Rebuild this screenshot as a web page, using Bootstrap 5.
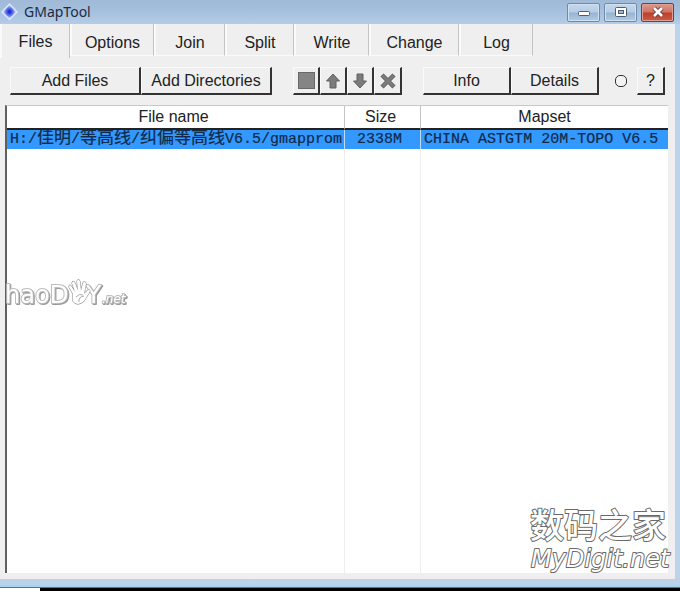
<!DOCTYPE html>
<html lang="en">
<head>
<meta charset="utf-8">
<meta name="viewport" content="width=device-width, initial-scale=1">
<title>GMapTool</title>
<link href="https://cdn.jsdelivr.net/npm/bootstrap@5.3.0/dist/css/bootstrap.min.css" rel="stylesheet">
<style>
body{font:16px/20px "Liberation Sans",Arial,sans-serif;color:#222;background:#000}
.app{background:#bcd3ea;min-height:100vh}
.titlebar{height:24px;background:linear-gradient(#9fb9d6,#a6c1de 50%,#b3cde8);padding-right:6px}
.title-text{font:14px/22px "Noto Sans",sans-serif;color:#1d2b42}
.win-btn{width:33px;height:19px;border:1px solid #6f89a8;border-radius:2px;background:linear-gradient(#c5d8ec,#b5cce5 48%,#96b4d3 52%,#b1cae3);box-shadow:inset 0 0 0 1px #d2e1f0}
.win-close{border-color:#7c3b3b;background:linear-gradient(#dd9a8c,#d07362 48%,#bb3f2b 52%,#cd5b43);box-shadow:inset 0 0 0 1px #dca094}
.client{background:#efefef;margin-right:5px}
.tab{height:32px;border:0;border-right:1px solid #c4c4c4;border-left:2px solid #fafafa;border-bottom:1px solid #fafafa;background:#efefef;color:#222;padding:6px 0 0}
.tab.active{height:34px;border-bottom:0;padding:1px 0 0}
.w-files{width:70px}.w-options{width:84px}.w-join{width:71px}.w-split{width:69px}.w-write{width:75px}.w-change{width:90px}.w-log{width:74px}
.toolbar{padding:9px 10px 0}
.tool{height:28px;border:solid;border-width:1px 2px 2px 1px;border-color:#fafafa #333 #333 #fafafa;background:#efefef;color:#222;padding:0}
.tool-wide{width:131px}.tool-mid{width:88px}.tool-sq{width:27px}.tool-help{width:28px}
.gap-left{margin-left:21px}
.round{appearance:none;width:12px;height:12px;border:1px solid #333;border-radius:5px;background:#f4f4f4;margin:0 10px 0 16px}
.listing{margin:10px 7px 6px 5px;background:linear-gradient(#eee,#eee) 51% 0/1px 100% no-repeat,linear-gradient(#eee,#eee) 62.5% 0/1px 100% no-repeat,#fff;border-left:2px solid #606060;border-top:1px solid #c8c8c8}
.file-table{table-layout:fixed;border-collapse:separate;border-spacing:0}
.file-table th{font-weight:400;text-align:center;height:24px;padding:0 4px 0 0;border-bottom:2px solid #222;line-height:20px;background:#fff}
.file-table th:last-child{padding:0}
.file-table th+th{border-left:1px solid #c4c4c4}
.file-table td{height:19px;padding:0 0 0 3px;background:#3399ff;font:15px/19px "Liberation Mono","Noto Sans CJK SC",monospace;color:#102a48;-webkit-text-stroke:.2px #102a48;white-space:nowrap;overflow:hidden}
.file-table td+td{border-left:1px solid #b9dcff}
.file-table td:nth-child(2){text-align:center;padding:0 6px 0 0}
.cn{font-size:17px;line-height:1}
.frame-bottom{height:9px;background:linear-gradient(#c3cede,#b7d4f2 60%,#a5d3ee);border-bottom:1px solid #39858d}
.desk{height:3px;background:#000}
.desk-start{width:40px;height:3px;background:#fff}
.logo-left{left:5px;top:275px}
.logo-right{right:8px;bottom:12px}
</style>
<script src="https://cdn.jsdelivr.net/npm/bootstrap@5.3.0/dist/js/bootstrap.bundle.min.js"></script>
</head>
<body>
<div class="app d-flex flex-column position-relative">
<header class="titlebar d-flex align-items-center">
<svg width="20" height="22" viewBox="0 0 20 22"><defs><radialGradient id="g"><stop offset=".1" stop-color="#1624d8"/><stop offset=".55" stop-color="#6277e8"/><stop offset="1" stop-color="#c7d5f6"/></radialGradient></defs><path d="M9.500 2L18 11 9.500 19.500 1 11Z" fill="#dce7f8"/><path d="M9.500 4L16 11 9.500 17.500 3 11Z" fill="url(#g)"/></svg>
<span class="title-text ps-1">GMapTool</span>
<div class="d-flex ms-auto gap-1">
<button class="win-btn p-0 d-flex align-items-center justify-content-center" aria-label="Minimize"><svg width="14" height="12"><rect x="1.500" y="5.500" width="11" height="4" rx="1" fill="#fff" stroke="#4c5c72"/></svg></button>
<button class="win-btn p-0 d-flex align-items-center justify-content-center" aria-label="Maximize"><svg width="14" height="12"><rect x="1.500" y="1.500" width="11" height="9" rx="1" fill="#fff" stroke="#4c5c72"/><rect x="4.500" y="4.500" width="5" height="3" fill="#9db8d4" stroke="#4c5c72"/></svg></button>
<button class="win-btn win-close p-0 d-flex align-items-center justify-content-center" aria-label="Close"><svg width="14" height="12"><path d="M3 2L11 10M11 2L3 10" stroke="#603335" stroke-width="4.500"/><path d="M3 2L11 10M11 2L3 10" stroke="#fff" stroke-width="2.800"/></svg></button>
</div>
</header>
<main class="client d-flex flex-column flex-grow-1">
<nav class="d-flex" role="tablist">
<button class="tab active w-files" role="tab">Files</button><button class="tab w-options" role="tab">Options</button><button class="tab w-join" role="tab">Join</button><button class="tab w-split" role="tab">Split</button><button class="tab w-write" role="tab">Write</button><button class="tab w-change" role="tab">Change</button><button class="tab w-log" role="tab">Log</button>
</nav>
<div class="toolbar d-flex align-items-center">
<button class="tool tool-wide">Add Files</button><button class="tool tool-wide">Add Directories</button>
<div class="d-flex gap-left">
<button class="tool tool-sq d-flex align-items-center justify-content-center" aria-label="Stop"><svg width="17" height="17"><rect x=".5" y=".5" width="16" height="16" fill="#858585" stroke="#696969"/></svg></button>
<button class="tool tool-sq d-flex align-items-center justify-content-center" aria-label="Move up"><svg width="16" height="16"><path d="M8 1L14.500 8H11V15H5V8H1.500Z" fill="#7b7b7b" stroke="#606060"/></svg></button>
<button class="tool tool-sq d-flex align-items-center justify-content-center" aria-label="Move down"><svg width="16" height="16"><path d="M8 15L14.500 8H11V1H5V8H1.500Z" fill="#7b7b7b" stroke="#606060"/></svg></button>
<button class="tool tool-help d-flex align-items-center justify-content-center" aria-label="Remove"><svg width="16" height="16"><path d="M2 2L14 14M14 2L2 14" stroke="#606060" stroke-width="4.500"/><path d="M2.500 2.500L13.500 13.500M13.500 2.500L2.500 13.500" stroke="#7b7b7b" stroke-width="3"/></svg></button>
</div>
<div class="d-flex align-items-center gap-left"><button class="tool tool-mid">Info</button><button class="tool tool-mid">Details</button><input class="round" type="radio" aria-label="Status"><button class="tool tool-help">?</button></div>
</div>
<section class="listing flex-grow-1">
<table class="file-table w-100">
<colgroup><col style="width:51%"><col style="width:11.5%"><col></colgroup>
<thead><tr><th>File name</th><th>Size</th><th>Mapset</th></tr></thead>
<tbody><tr><td>H:/<span class="cn">佳明</span>/<span class="cn">等高线</span>/<span class="cn">纠偏等高线</span>V6.5/gmapprom</td><td>2338M</td><td>CHINA ASTGTM 20M-TOPO V6.5</td></tr></tbody>
</table>
</section>
</main>
<div class="frame-bottom"></div>
<div class="desk"><div class="desk-start"></div></div>
<svg class="logo-left position-absolute" width="125" height="36" viewBox="0 0 125 36" font-family="DejaVu Sans,sans-serif" paint-order="stroke" stroke-linejoin="round">
<g fill="#fff" stroke="#bbb" stroke-width="2" style="filter:drop-shadow(1px 1px 0 #999)"><text x="0" y="28" font-size="24">hao<tspan font-size="25">D</tspan></text><text x="81" y="28" font-size="25">Y</text><text x="97" y="28" font-size="12" font-style="italic">.net</text></g>
<path d="M68 19L64 12Q64 9 66 11L70 17L67 8Q68 5 70 8L73 16L72 6Q74 3 75 7L76 16L78 8Q80 5 81 9L79 19L83 15Q86 14 84 18L79 26Q72 32 68 26Z" fill="#fff" stroke="#999" stroke-width="1.300"/><path d="M71 22Q74 18 78 20M74 27Q73 22 79 21" fill="none" stroke="#aaa"/>
</svg>
<svg class="logo-right position-absolute" width="142" height="80" viewBox="0 0 142 80" fill="#fff" stroke="#6a6a6a" stroke-width="2" paint-order="stroke" stroke-linejoin="round">
<text x="0" y="39" font-family="Noto Sans CJK SC,sans-serif" font-size="34" font-weight="500">数码之家</text>
<text x="1" y="68" font-family="DejaVu Sans,sans-serif" font-size="24" font-style="italic">MyDigit.net</text>
</svg>
</div>
</body>
</html>
